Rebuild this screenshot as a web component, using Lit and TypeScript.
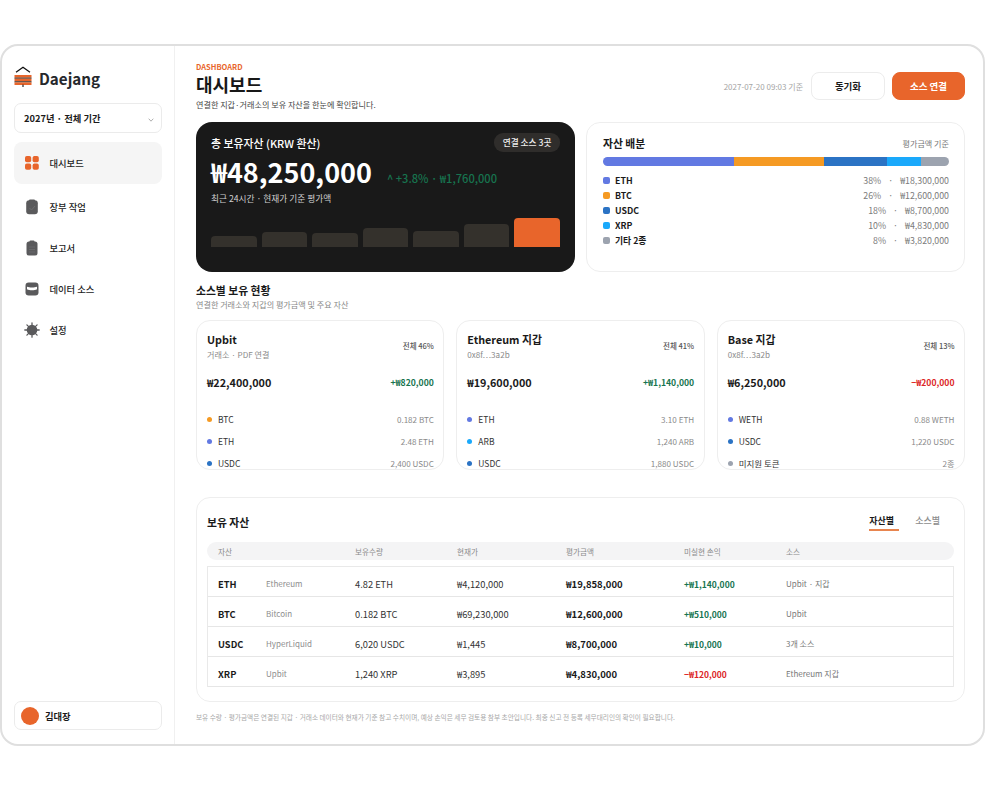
import { LitElement, html, css, svg } from "lit";
import { customElement } from "lit/decorators.js";

const alloc = [
  { n: "ETH", p: 38, v: "₩18,300,000", c: "#6279e2" },
  { n: "BTC", p: 26, v: "₩12,600,000", c: "#f59a23" },
  { n: "USDC", p: 18, v: "₩8,700,000", c: "#2b73c4" },
  { n: "XRP", p: 10, v: "₩4,830,000", c: "#1aa9fb" },
  { n: "기타 2종", p: 8, v: "₩3,820,000", c: "#9ca3af" },
];
const bars = [11, 15, 14, 19, 16, 23, 29];
const sources = [
  { t: "Upbit", s: "거래소 · PDF 연결", sh: "전체 46%", a: "₩22,400,000", g: "+₩820,000", up: true,
    r: [["BTC", "0.182 BTC", "#f59a23"], ["ETH", "2.48 ETH", "#6279e2"], ["USDC", "2,400 USDC", "#2b73c4"]] },
  { t: "Ethereum 지갑", s: "0x8f…3a2b", sh: "전체 41%", a: "₩19,600,000", g: "+₩1,140,000", up: true,
    r: [["ETH", "3.10 ETH", "#6279e2"], ["ARB", "1,240 ARB", "#1aa9fb"], ["USDC", "1,880 USDC", "#2b73c4"]] },
  { t: "Base 지갑", s: "0x8f…3a2b", sh: "전체 13%", a: "₩6,250,000", g: "−₩200,000", up: false,
    r: [["WETH", "0.88 WETH", "#6279e2"], ["USDC", "1,220 USDC", "#2b73c4"], ["미지원 토큰", "2종", "#9ca3af"]] },
];
const rows = [
  ["ETH", "Ethereum", "4.82 ETH", "₩4,120,000", "₩19,858,000", "+₩1,140,000", "Upbit · 지갑", true],
  ["BTC", "Bitcoin", "0.182 BTC", "₩69,230,000", "₩12,600,000", "+₩510,000", "Upbit", true],
  ["USDC", "HyperLiquid", "6,020 USDC", "₩1,445", "₩8,700,000", "+₩10,000", "3개 소스", true],
  ["XRP", "Upbit", "1,240 XRP", "₩3,895", "₩4,830,000", "−₩120,000", "Ethereum 지갑", false],
];

const gray = "#5a5a5c";
const icons = {
  dash: svg`<svg viewBox="0 0 14 14" width="14" height="14"><rect x="0" y="0" width="6.2" height="6.2" rx="1.8" fill="#e8652b"/><rect x="7.6" y="0" width="6.2" height="6.2" rx="1.8" fill="#e8652b"/><rect x="0" y="7.6" width="6.2" height="6.2" rx="1.8" fill="#e8652b"/><rect x="7.6" y="7.6" width="6.2" height="6.2" rx="1.8" fill="#e8652b"/></svg>`,
  ledger: svg`<svg viewBox="0 0 14 16" width="14" height="16"><rect x="1.2" y="1.2" width="11.6" height="14" rx="3" fill="${gray}"/><rect x="4" y="0.4" width="6" height="2.5" rx="1" fill="${gray}"/><path d="M4.5 9l2 2 3.5-4" fill="none" stroke="#6e6e70" stroke-width="0.9"/></svg>`,
  report: svg`<svg viewBox="0 0 14 16" width="14" height="16"><rect x="1.5" y="1.5" width="11" height="14" rx="2.5" fill="${gray}"/><rect x="4.5" y="0.5" width="5" height="2.5" rx="1" fill="${gray}"/><path d="M4 7h6M4 9.5h6M4 12h6" stroke="#6e6e70" stroke-width="0.7"/></svg>`,
  data: svg`<svg viewBox="0 0 14 14" width="14" height="14"><rect x="0.5" y="0.5" width="13" height="13" rx="3.2" fill="${gray}"/><path d="M2 4.8c2.4 1 7.6 1 10 0v2.4c-2.4 1.4-7.6 1.4-10 0z" fill="#fff"/></svg>`,
  gear: svg`<svg viewBox="0 0 16 16" width="16" height="16"><circle cx="8" cy="8" r="5.3" fill="${gray}"/><g stroke="${gray}" stroke-width="1.3" stroke-linecap="round"><path d="M8 .8v14.4M.8 8h14.4M2.9 2.9l10.2 10.2M13.1 2.9L2.9 13.1"/></g></svg>`,
};

@customElement("app-root")
export class AppRoot extends LitElement {
  static styles = css`
    :host { display: block; width: 986px; height: 789px; padding-top: 44px; box-sizing: border-box; background: #fff;
      font-family: "Noto Sans CJK KR", "Noto Sans", sans-serif; color: #1a1a1a; overflow: hidden; }
    * { box-sizing: border-box; }
    .frame { width: 985px; height: 702px; border: 2px solid #dfdfdf; border-radius: 18px; display: flex; background: #fff; overflow: hidden; }
    .side { width: 173px; flex: none; border-right: 1px solid #f0f0f0; padding: 20px 12px 14px; display: flex; flex-direction: column; }
    .logo { display: flex; align-items: flex-start; gap: 7px; height: 24px; font-size: 15.2px; font-weight: 600; color: #26282c; line-height: 24px; }
    .logo svg { flex: none; }
    .select { margin-top: 13px; height: 30px; border: 1px solid #ebebeb; border-radius: 7px; display: flex; align-items: center; justify-content: space-between; padding: 0 7px 0 9px; font-size: 9.3px; font-weight: 600; }
    .select svg { margin-top: 3px; }
    nav { margin-top: 9px; display: flex; flex-direction: column; }
    .item { height: 41px; display: flex; align-items: center; padding-left: 10px; gap: 9.5px; font-size: 9.3px; font-weight: 500; color: #222; }
    .item.active { height: 42px; margin-bottom: 2px; background: #f5f5f5; border-radius: 8px; }
    .ic { width: 16px; display: flex; justify-content: center; }
    .user { margin-top: auto; height: 29px; border: 1px solid #ebebeb; border-radius: 7px; display: flex; align-items: center; padding-left: 6px; gap: 6px; font-size: 9.3px; font-weight: 600; }
    .avatar { width: 18px; height: 18px; border-radius: 50%; background: #e8652b; }
    main { flex: 1; padding: 16px 18px 0 21px; min-width: 0; }
    .head { display: flex; justify-content: space-between; height: 60px; }
    .eyebrow { font-size: 7.5px; font-weight: 700; color: #e8652b; line-height: 10px; }
    h1 { margin: 0; font-size: 18px; font-weight: 700; line-height: 24px; color: #181818; }
    .desc { font-size: 8.1px; line-height: 12px; margin-top: 3px; color: #444; }
    .actions { display: flex; align-items: center; height: 28px; margin-top: 10px; }
    .stamp { color: #a5a5a5; margin-right: 8px; font-size: 8px; }
    .btn { height: 28px; width: 74px; border-radius: 8px; border: 1px solid #ececec; display: flex; align-items: center; justify-content: center; font-size: 9.5px; font-weight: 600; }
    .btn.pri { width: 73px; background: #e8652b; border-color: #e8652b; color: #fff; margin-left: 7px; }
    .top { display: grid; grid-template-columns: 379px 379px; gap: 11px; }
    .hero { height: 150px; background: #191919; border-radius: 16px; padding: 11px 15px 0; color: #fff; display: flex; flex-direction: column; }
    .hrow { display: flex; justify-content: space-between; align-items: center; height: 19px; font-size: 10.9px; font-weight: 500; }
    .chip { background: #2f2d2b; border-radius: 9px; height: 19px; padding: 0 8.5px; font-size: 8.7px; display: flex; align-items: center; font-weight: 500; color: #eee; }
    .amt { display: flex; align-items: baseline; gap: 15px; margin-top: 1px; height: 38px; font-size: 27px; font-weight: 600; line-height: 38px; }
    .amt span { font-size: 11.1px; font-weight: 500; color: #17744f; }
    .hsub { font-size: 8.7px; color: #cfcfcf; line-height: 14px; margin-top: 1px; }
    .bars { display: flex; gap: 5px; height: 29px; align-items: flex-end; margin-top: 12px; }
    .bars div { flex: 1; background: #34312c; border-radius: 4px 4px 0 0; }
    .bars div:last-child { background: #e8652b; }
    .card { border: 1px solid #eeeeee; border-radius: 14px; background: #fff; }
    .allocation { height: 150px; padding: 12px 15px 0 16px; }
    .ah { display: flex; justify-content: space-between; align-items: center; height: 16px; }
    .ah b { font-size: 10.8px; font-weight: 600; }
    .ah span { font-size: 8.1px; color: #777; }
    .stack { display: flex; height: 9px; border-radius: 5px; overflow: hidden; margin-top: 6px; }
    .legend { margin-top: 6.5px; }
    .lrow { height: 15px; display: flex; align-items: center; font-size: 8.8px; }
    .sq { width: 7px; height: 7px; border-radius: 2px; margin-right: 5px; }
    .lrow b { font-weight: 600; flex: 1; }
    .lrow span { color: #7b7b7b; }
    .lrow i { font-style: normal; color: #7b7b7b; margin: 0 7px; }
    .sect { margin-top: 10px; }
    h2 { margin: 0; font-size: 10.8px; font-weight: 600; line-height: 16px; }
    .sect p { margin: 1px 0 0; font-size: 8.1px; color: #888; line-height: 12px; }
    .srcs { display: grid; grid-template-columns: repeat(3, 1fr); gap: 12px; margin-top: 9px; }
    .src { height: 150px; overflow: hidden; padding: 9px 9.5px 0 10px; }
    .st { display: flex; justify-content: space-between; align-items: center; }
    .st b { display: block; font-size: 10.8px; font-weight: 600; line-height: 18px; }
    .st small { display: block; font-size: 8.1px; color: #8a8a8a; line-height: 13px; }
    .st em { font-style: normal; font-size: 7.5px; color: #555; font-weight: 500; }
    .sa { display: flex; justify-content: space-between; align-items: center; margin-top: 13px; height: 16px; }
    .sa b { font-size: 10.8px; font-weight: 600; }
    .sa span { font-size: 8.6px; font-weight: 600; }
    .up { color: #17744f; }
    .down { color: #dc2626; }
    .sr { height: 22px; display: flex; align-items: center; font-size: 8.1px; }
    .dot { width: 5px; height: 5px; border-radius: 50%; margin-right: 6px; }
    .sr b { font-weight: 400; color: #333; flex: 1; font-size: 8.5px; }
    .sr span { color: #8a8a8a; }
    .srs { margin-top: 18px; }
    .table { height: 205px; padding: 0 10px; margin-top: 27px; }
    .th { display: flex; justify-content: space-between; height: 44px; align-items: flex-start; }
    .th h2 { margin-top: 16px; }
    .tabs { display: flex; gap: 16px; margin: 14px 14px 0 0; font-size: 9px; color: #8d8d8d; height: 19px; font-weight: 500; }
    .tab { display: flex; align-items: flex-start; height: 100%; line-height: 17px; }
    .tab.on { color: #1a1a1a; font-weight: 600; position: relative; width: 30px; }
    .tab.on::after { content: ""; position: absolute; left: 0; right: 0; bottom: 0; height: 2px; background: #e8854f; }
    .g { display: grid; grid-template-columns: 48px 89px 102px 109px 118px 102px 1fr; padding-left: 11px; align-items: center; }
    .thead { height: 18px; background: #f4f4f5; border-radius: 9px; font-size: 7.6px; color: #8b8b8b; }
    .tb { margin-top: 6px; border: 1px solid #e9e9e9; border-width: 1px 1px 0 1px; }
    .tr { height: 30px; border-bottom: 1px solid #e6e6e6; font-size: 9.3px; color: #333; padding: 4px 0 0 10px; }
    .tr .a { font-weight: 600; color: #1a1a1a; }
    .tr .n { color: #8d8d8d; font-size: 8px; }
    .tr .v { font-weight: 600; color: #1a1a1a; font-size: 9.5px; }
    .tr .g2 { font-weight: 600; font-size: 8.5px; }
    .tr .s { color: #777; font-size: 8px; }
    .foot { margin-top: 9px; font-size: 6.67px; color: #a8a8a8; line-height: 12px; white-space: nowrap; }
  `;

  render() {
    return html`<div class="frame">
      <aside class="side">
        <div class="logo">
          <svg viewBox="0 0 18 24" width="18" height="24">
            <path d="M2 6.2 9 1.2 16 6.2" fill="none" stroke="#111" stroke-width="1.3"/>
            <rect x="0.5" y="9" width="17" height="2.6" fill="#e8652b"/>
            <rect x="0.5" y="11.6" width="17" height="1.1" fill="#2a2420"/>
            <rect x="0.5" y="12.7" width="17" height="2.6" fill="#e8652b"/>
            <rect x="0.5" y="15.3" width="17" height="1.1" fill="#2a2420"/>
            <rect x="0.5" y="16.4" width="17" height="2.6" fill="#e8652b"/>
            <path d="M9 18.5v2.5" stroke="#2a2420" stroke-width="1.2"/>
          </svg>
          Daejang
        </div>
        <div class="select">2027년 · 전체 기간
          <svg viewBox="0 0 6 4" width="6" height="4"><path d="M.7.7 3 3.2 5.3.7" fill="none" stroke="#999" stroke-width="0.8"/></svg>
        </div>
        <nav>
          <div class="item active"><span class="ic">${icons.dash}</span>대시보드</div>
          <div class="item"><span class="ic">${icons.ledger}</span>장부 작업</div>
          <div class="item"><span class="ic">${icons.report}</span>보고서</div>
          <div class="item"><span class="ic">${icons.data}</span>데이터 소스</div>
          <div class="item"><span class="ic">${icons.gear}</span>설정</div>
        </nav>
        <div class="user"><span class="avatar"></span>김대장</div>
      </aside>
      <main>
        <div class="head">
          <div>
            <div class="eyebrow">DASHBOARD</div>
            <h1>대시보드</h1>
            <div class="desc">연결한 지갑·거래소의 보유 자산을 한눈에 확인합니다.</div>
          </div>
          <div class="actions">
            <span class="stamp">2027-07-20 09:03 기준</span>
            <div class="btn">동기화</div>
            <div class="btn pri">소스 연결</div>
          </div>
        </div>
        <div class="top">
          <section class="hero">
            <div class="hrow">총 보유자산 (KRW 환산)<span class="chip">연결 소스 3곳</span></div>
            <div class="amt">₩48,250,000<span>^ +3.8% · ₩1,760,000</span></div>
            <div class="hsub">최근 24시간 · 현재가 기준 평가액</div>
            <div class="bars">${bars.map((h) => html`<div style="height:${h}px"></div>`)}</div>
          </section>
          <section class="card allocation">
            <div class="ah"><b>자산 배분</b><span>평가금액 기준</span></div>
            <div class="stack">${alloc.map((a) => html`<div style="width:${a.p}%;background:${a.c}"></div>`)}</div>
            <div class="legend">
              ${alloc.map((a) => html`<div class="lrow"><div class="sq" style="background:${a.c}"></div><b>${a.n}</b><span>${a.p}%</span><i>·</i><span>${a.v}</span></div>`)}
            </div>
          </section>
        </div>
        <div class="sect">
          <h2>소스별 보유 현황</h2>
          <p>연결한 거래소와 지갑의 평가금액 및 주요 자산</p>
        </div>
        <div class="srcs">
          ${sources.map((s) => html`<section class="card src">
            <div class="st"><div><b>${s.t}</b><small>${s.s}</small></div><em>${s.sh}</em></div>
            <div class="sa"><b>${s.a}</b><span class=${s.up ? "up" : "down"}>${s.g}</span></div>
            <div class="srs">
              ${s.r.map((r) => html`<div class="sr"><div class="dot" style="background:${r[2]}"></div><b>${r[0]}</b><span>${r[1]}</span></div>`)}
            </div>
          </section>`)}
        </div>
        <section class="card table">
          <div class="th">
            <h2>보유 자산</h2>
            <div class="tabs"><div class="tab on">자산별</div><div class="tab">소스별</div></div>
          </div>
          <div class="g thead"><span>자산</span><span></span><span>보유수량</span><span>현재가</span><span>평가금액</span><span>미실현 손익</span><span>소스</span></div>
          <div class="tb">
            ${rows.map((r) => html`<div class="g tr">
              <span class="a">${r[0]}</span><span class="n">${r[1]}</span><span>${r[2]}</span><span>${r[3]}</span><span class="v">${r[4]}</span>
              <span class="g2 ${r[7] ? "up" : "down"}">${r[5]}</span><span class="s">${r[6]}</span>
            </div>`)}
          </div>
        </section>
        <div class="foot">보유 수량 · 평가금액은 연결된 지갑 · 거래소 데이터와 현재가 기준 참고 수치이며, 예상 손익은 세무 검토용 참부 초안입니다. 최종 신고 전 등록 세무대리인의 확인이 필요합니다.</div>
      </main>
    </div>`;
  }
}
